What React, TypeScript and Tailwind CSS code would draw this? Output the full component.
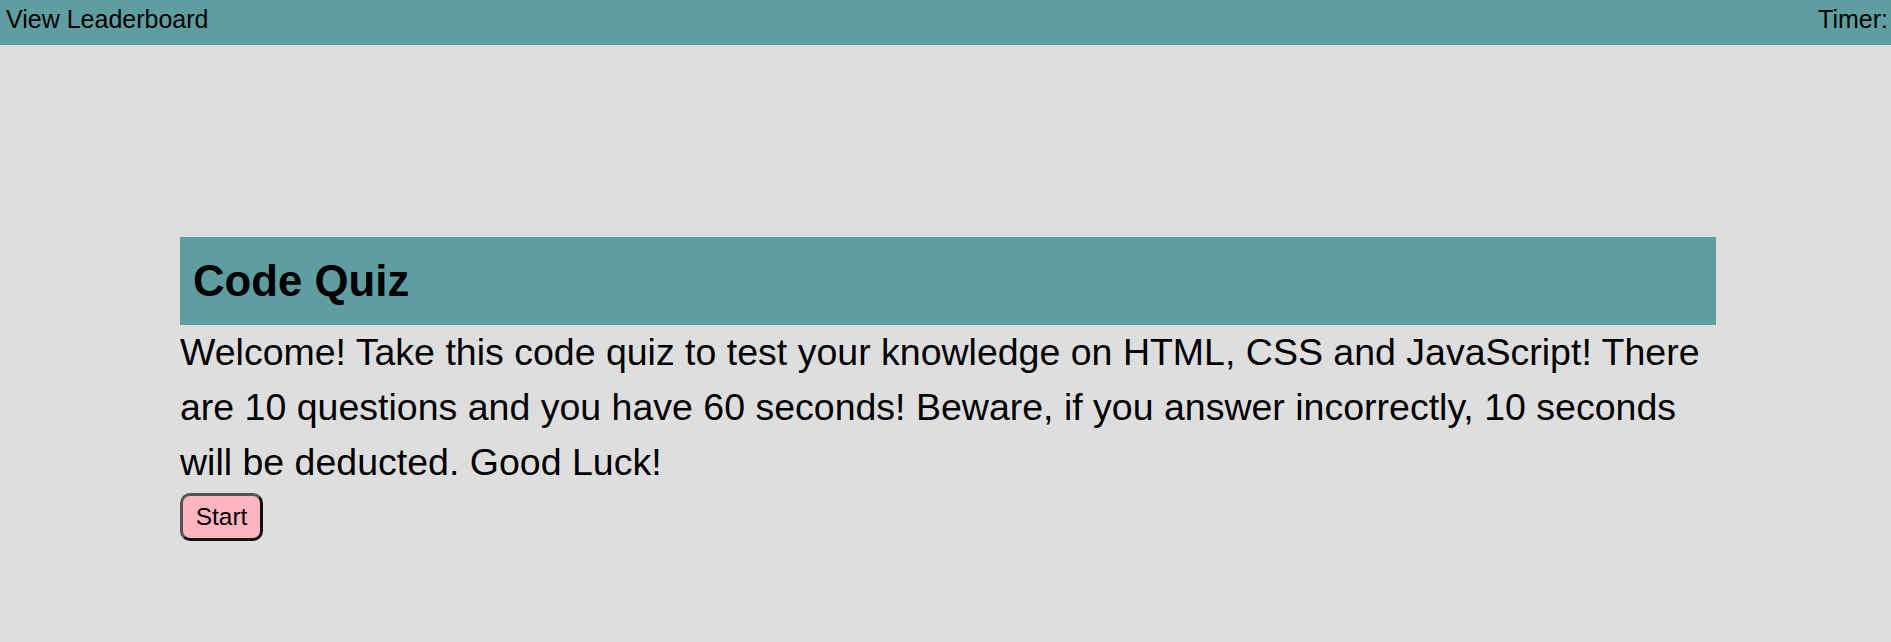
export default function App() {
  return (
    <div className="min-h-screen w-full bg-[#dedede] text-black" style={{ fontFamily: '"Liberation Sans", Arial, sans-serif' }}>
      {/* Top bar */}
      <header className="flex h-[45px] items-start justify-between bg-[#5f9ea0] pl-[6px] pr-[3px] pt-[5px] text-[25px] leading-[1.15]">
        <span>View Leaderboard</span>
        <span>Timer:</span>
      </header>

      {/* Quiz intro */}
      <main className="ml-[180px] mt-[192px] w-[1536px]">
        <div className="flex h-[88px] w-[1536px] items-center bg-[#5f9ea0] pl-[13px]">
          <h1 className="text-[43.75px] font-bold leading-[1.15]">Code Quiz</h1>
        </div>
        <p className="w-[1536px] text-[37.5px] leading-[55px]">
          Welcome! Take this code quiz to test your knowledge on HTML, CSS and JavaScript! There are 10 questions and you
          have 60 seconds! Beware, if you answer incorrectly, 10 seconds will be deducted. Good Luck!
        </p>
        <button className="mt-[3px] h-[48px] w-[83px] rounded-[10px] border-[3px] border-t-[#555] border-l-[#555] border-b-[#111] border-r-[#111] bg-[#ffb6c1] text-[24.5px] leading-none">
          Start
        </button>
      </main>
    </div>
  );
}
